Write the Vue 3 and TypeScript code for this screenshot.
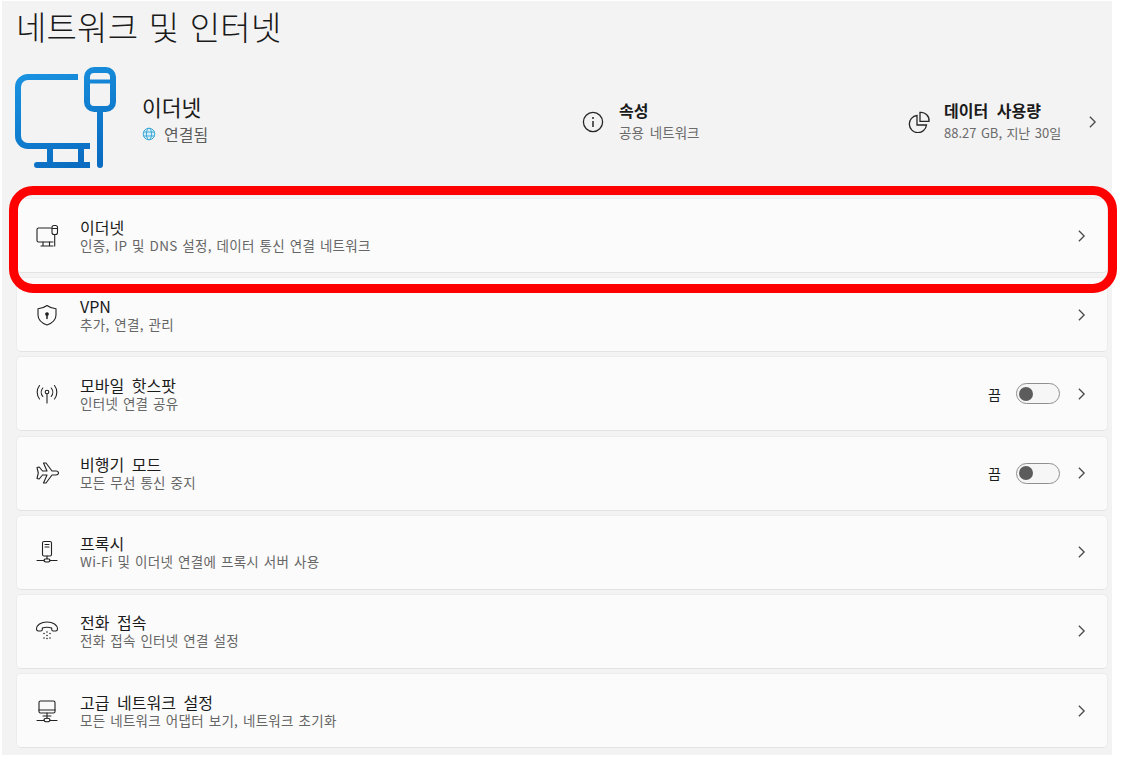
<script setup lang="ts">
interface Row {
  title: string
  sub: string
  icon: string
  toggle?: boolean
}
const rows: Row[] = [
  { title: '이더넷', sub: '인증, IP 및 DNS 설정, 데이터 통신 연결 네트워크', icon: 'ethernet' },
  { title: 'VPN', sub: '추가, 연결, 관리', icon: 'vpn' },
  { title: '모바일 핫스팟', sub: '인터넷 연결 공유', icon: 'hotspot', toggle: true },
  { title: '비행기 모드', sub: '모든 무선 통신 중지', icon: 'plane', toggle: true },
  { title: '프록시', sub: 'Wi-Fi 및 이더넷 연결에 프록시 서버 사용', icon: 'proxy' },
  { title: '전화 접속', sub: '전화 접속 인터넷 연결 설정', icon: 'dial' },
  { title: '고급 네트워크 설정', sub: '모든 네트워크 어댑터 보기, 네트워크 초기화', icon: 'advanced' },
]
</script>

<template>
  <div class="page">
    <h1 class="title">네트워크 및 인터넷</h1>

    <section class="hero">
      <svg class="hero-icon" viewBox="0 0 110 110" fill="none">
        <defs>
          <linearGradient id="heroGrad" gradientUnits="userSpaceOnUse" x1="20" y1="5" x2="60" y2="108">
            <stop offset="0" stop-color="#1a94e2" />
            <stop offset="1" stop-color="#0a6cc0" />
          </linearGradient>
        </defs>
        <g stroke="url(#heroGrad)" stroke-width="6" stroke-linecap="butt">
          <path d="M68 15H18a10 10 0 0 0-10 10v49a10 10 0 0 0 10 10h62" />
          <path d="M40 84v19M71 84v19" />
          <path d="M80 103H30" />
          <rect x="77" y="8" width="26" height="39" rx="7" />
          <path d="M77 19.500h26" stroke-width="4" />
          <path d="M90 47v56" stroke-linecap="round" />
          <path d="M27 103h3" stroke-linecap="round" />
        </g>
      </svg>
      <div class="hero-name">
        <div class="hero-title">이더넷</div>
        <div class="hero-status">
          <svg class="globe" viewBox="0 0 14 14" fill="none" stroke="#3fa9d8" stroke-width="1">
            <circle cx="7" cy="7" r="5.800" fill="#d5eef7" />
            <ellipse cx="7" cy="7" rx="2.600" ry="5.800" />
            <path d="M1.200 5h11.600M1.200 9h11.600" />
          </svg>
          <span>연결됨</span>
        </div>
      </div>
      <div class="hero-prop prop-one">
        <svg class="prop-icon" viewBox="0 0 22 22" fill="none" stroke="#262626" stroke-width="1.300">
          <circle cx="11" cy="11" r="9.600" />
          <path d="M11 10v6" stroke-width="1.500" />
          <circle cx="11" cy="6.900" r="1" fill="#262626" stroke="none" />
        </svg>
        <div>
          <div class="prop-title">속성</div>
          <div class="prop-sub">공용 네트워크</div>
        </div>
      </div>
      <div class="hero-prop prop-two">
        <svg class="prop-icon" viewBox="0 0 24 22" fill="none" stroke="#262626" stroke-width="1.300">
          <path d="M10 4.500a8.600 8.600 0 1 0 9.500 9.500H10z" />
          <path d="M13 1.400a8 8 0 0 1 9 9h-9z" />
        </svg>
        <div>
          <div class="prop-title">데이터 사용량</div>
          <div class="prop-sub usage">88.27 GB, 지난 30일</div>
        </div>
      </div>
      <svg class="chev" viewBox="0 0 10 16" fill="none"><path d="M2 2l6 6-6 6" /></svg>
    </section>

    <div class="list">
      <div v-for="row in rows" :key="row.title" class="card">
        <span class="icon-box">
          <svg class="row-icon" viewBox="0 0 24 24" fill="none" stroke="#222" stroke-width="1.100" stroke-linecap="round" stroke-linejoin="round">
            <template v-if="row.icon === 'ethernet'">
              <path d="M16 4H3.500A1.500 1.500 0 0 0 2 5.500v11A1.500 1.500 0 0 0 3.500 18H18" />
              <path d="M8 18v4M14.500 18v4M6 22h12" />
              <rect x="17" y="1.500" width="5.500" height="9" rx="2" />
              <path d="M17 4.500h5.500M19.700 10.500v11.500" />
            </template>
            <template v-else-if="row.icon === 'vpn'">
              <path d="M12 2.500c2.600 2 5.400 3 9 3.200V12c0 5-3.600 8-9 10-5.400-2-9-5-9-10V5.700c3.600-.2 6.400-1.200 9-3.200z" />
              <circle cx="12" cy="11" r="1.300" fill="#222" />
              <path d="M12 11v4.500" stroke-width="1.500" />
            </template>
            <template v-else-if="row.icon === 'hotspot'">
              <circle cx="12" cy="10" r="1.800" />
              <path d="M12 11.800V21" />
              <path d="M7.800 6a6.500 6.500 0 0 0 0 8.500M16.200 6a6.500 6.500 0 0 1 0 8.500" />
              <path d="M4.500 3.500a11 11 0 0 0 0 13.500M19.500 3.500a11 11 0 0 1 0 13.500" />
            </template>
            <template v-else-if="row.icon === 'plane'">
              <path d="M2 6.500l2.200-.5L7.500 10h4.500L8.500 2H11l6 8h4c1.500 0 2.500 1 2.500 2s-1 2-2.500 2h-4l-6 8H8.500l3.500-8H7.500L4.200 18 2 17.500 3.300 12z" />
            </template>
            <template v-else-if="row.icon === 'proxy'">
              <rect x="7.500" y="1.500" width="9" height="14.500" rx="1.500" />
              <path d="M10 4.500h4M10 7h4" />
              <path d="M12 16v3M2 20.500h7M15 20.500h7" />
              <path d="M9 20.500c0-1 1.300-1.800 3-1.800s3 .8 3 1.800-1.300 1.500-3 1.500-3-.5-3-1.500z" />
            </template>
            <template v-else-if="row.icon === 'dial'">
              <path d="M1.500 10c0-4 4.500-7 10.500-7s10.500 3 10.500 7c0 1.300-.6 2-1.800 2h-2.400c-1 0-1.600-.6-1.600-1.500V9c-3-1-6.400-1-9.400 0v1.500c0 .9-.6 1.500-1.600 1.500H3.300c-1.200 0-1.800-.7-1.800-2z" />
              <path d="M12 13v0M9 14.500v0M15 14.500v0M12 16.500v0M9 19v0M12 19.500v0M15 19v0" stroke-width="1.600" />
            </template>
            <template v-else>
              <rect x="4" y="2" width="16" height="12" rx="1.500" />
              <path d="M4 11h16" />
              <path d="M8 17h8M12 14v5" />
              <path d="M2 21.500h7M15 21.500h7" />
              <ellipse cx="12" cy="21" rx="3" ry="1.800" />
            </template>
          </svg>
        </span>
        <div class="text">
          <div class="row-title">{{ row.title }}</div>
          <div class="row-sub">{{ row.sub }}</div>
        </div>
        <template v-if="row.toggle">
          <span class="off">끔</span>
          <span class="switch"><span class="knob"></span></span>
        </template>
        <svg class="chev" viewBox="0 0 10 16" fill="none"><path d="M2 2l6 6-6 6" /></svg>
      </div>
    </div>

    <div class="highlight"></div>
  </div>
</template>

<style>
html, body {
  margin: 0;
  background: #ffffff;
}
</style>

<style scoped>
.page {
  position: relative;
  box-sizing: border-box;
  width: 1110px;
  height: 754px;
  margin: 1px 0 0 2px;
  padding: 0 4px 0 14px;
  background: #f3f3f3;
  font-family: "Noto Sans CJK KR", "Noto Sans", sans-serif;
  color: #1b1b1b;
  overflow: visible;
}
.title {
  margin: 0;
  height: 56px;
  font-size: 33px;
  font-weight: 300;
  line-height: 50px;
  letter-spacing: 0.200px;
  word-spacing: 3px;
  color: #1a1a1a;
}
.hero {
  display: flex;
  align-items: center;
  height: 130px;
  margin-bottom: 11px;
}
.hero-icon {
  width: 110px;
  height: 110px;
  margin: 0 0 10px -6px;
  flex: none;
}
.hero-name {
  margin: -7px 0 0 22px;
  width: 440px;
  flex: none;
}
.hero-title {
  font-size: 21.500px;
  line-height: 28px;
  font-weight: 400;
}
.hero-status {
  display: flex;
  align-items: center;
  gap: 8px;
  margin-top: 3px;
  font-size: 16px;
  line-height: 20px;
  color: #5c5c5c;
}
.globe {
  width: 14px;
  height: 14px;
}
.hero-prop {
  display: flex;
  align-items: center;
  flex: none;
}
.prop-one {
  width: 325px;
  gap: 15px;
}
.prop-two {
  width: 181px;
  gap: 13px;
}
.prop-icon {
  width: 22px;
  height: 22px;
  flex: none;
}
.prop-two .prop-icon {
  width: 24px;
}
.prop-title {
  font-size: 16px;
  line-height: 21px;
  font-weight: 700;
  word-spacing: 5px;
}
.prop-sub {
  font-size: 13.500px;
  line-height: 23px;
  word-spacing: 3px;
  color: #6a6a6a;
}
.usage {
  font-size: 13px;
  word-spacing: 1.500px;
}
.chev {
  width: 9px;
  height: 14px;
  flex: none;
  stroke: #4a4a4a;
  stroke-width: 1.500;
}
.list {
  display: flex;
  flex-direction: column;
  gap: 4.200px;
}
.card {
  box-sizing: border-box;
  height: 75px;
  display: flex;
  align-items: center;
  padding: 0 21px 0 18px;
  background: #fbfbfb;
  border: 1px solid #ececec;
  border-bottom-color: #e3e3e3;
  border-radius: 5px;
}
.icon-box {
  width: 24px;
  height: 24px;
  flex: none;
  margin-right: 21px;
}
.row-icon {
  display: block;
  width: 24px;
  height: 24px;
}
.text {
  flex: 1;
  min-width: 0;
}
.row-title {
  font-size: 16px;
  line-height: 18px;
  word-spacing: 4px;
  color: #1b1b1b;
}
.row-sub {
  font-size: 13.500px;
  line-height: 18px;
  letter-spacing: 0.280px;
  word-spacing: 1.500px;
  color: #666666;
}
.off {
  font-size: 14px;
  margin-right: 15px;
  color: #1b1b1b;
}
.switch {
  box-sizing: border-box;
  width: 44px;
  height: 21px;
  display: flex;
  align-items: center;
  padding-left: 2px;
  margin-right: 17px;
  background: #f6f6f6;
  border: 1px solid #8f8f8f;
  border-radius: 11px;
}
.knob {
  width: 14px;
  height: 14px;
  border-radius: 50%;
  background: #5c5c5c;
}
.highlight {
  position: absolute;
  left: 7px;
  top: 185px;
  width: 1108px;
  height: 107px;
  box-sizing: border-box;
  border: 9px solid #ff0000;
  border-radius: 24px;
  pointer-events: none;
}
</style>
